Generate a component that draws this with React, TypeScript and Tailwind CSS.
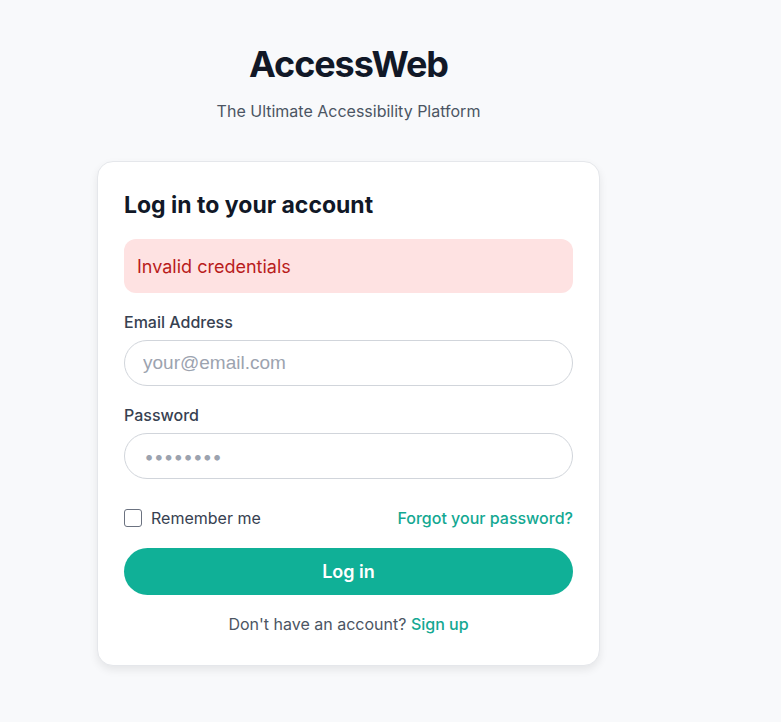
import React from "react";

export default function App() {
  return (
    <div className="min-h-[722px] w-full bg-[#f8f9fb]" style={{ fontFamily: "Inter, 'Noto Sans', sans-serif" }}>
      <div className="ml-[97px] w-[503px] pt-[42px]">
        <div className="flex flex-col items-center">
          <h1 className="text-[36px] font-bold leading-[44px] tracking-[-1.1px] text-[#111827]">AccessWeb</h1>
          <p className="mt-[13px] text-[16px] leading-[24px] text-[#4b5563]">The Ultimate Accessibility Platform</p>
        </div>
        <div className="mt-[38px] rounded-2xl border border-[#e5e7eb] bg-white px-[26px] pt-[28px] pb-[29px] shadow-[0_4px_8px_rgba(0,0,0,0.08)]">
          <h2 className="text-[23px] font-bold leading-[30px] text-[#111827]">Log in to your account</h2>
          <div className="mt-[19px] flex h-[54px] items-center rounded-xl bg-[#fee2e2] px-[13px] text-[18px] text-[#b91c1c]">
            Invalid credentials
          </div>
          <label className="mt-[20px] block text-[16px] font-medium leading-[18px] text-[#374151]">Email Address</label>
          <input
            type="email"
            placeholder="your@email.com"
            className="mt-[9px] block h-[46px] w-full rounded-full border border-[#d1d5db] bg-white px-[18px] text-[19px] text-[#111827] placeholder:text-[#9ca3af] outline-none"
            style={{ fontFamily: "'Liberation Sans', Arial, sans-serif" }}
          />
          <label className="mt-[20px] block text-[16px] font-medium leading-[18px] text-[#374151]">Password</label>
          <input
            type="password"
            placeholder="••••••••"
            className="mt-[9px] block h-[46px] w-full rounded-full border border-[#d1d5db] bg-white px-[19px] text-[18px] tracking-[-0.4px] text-[#111827] placeholder:text-[#9ca3af] outline-none"
          />
          <div className="mt-[27px] flex h-[24px] items-center justify-between">
            <label className="flex items-center gap-[9px] text-[16px] leading-[24px] text-[#374151]">
              <span className="inline-block h-[18px] w-[18px] rounded-[3px] border border-[#6b7280] bg-white" />
              Remember me
            </label>
            <a className="text-[16px] font-medium leading-[24px] text-[#14a892]">Forgot your password?</a>
          </div>
          <button className="mt-[18px] flex h-[47px] w-full items-center justify-center rounded-full bg-[#10b097] text-[18px] font-semibold text-white">
            Log in
          </button>
          <p className="mt-[17px] text-center text-[16px] leading-[24px] text-[#4b5563]">
            Don't have an account? <a className="font-medium text-[#14a892]">Sign up</a>
          </p>
        </div>
      </div>
    </div>
  );
}
